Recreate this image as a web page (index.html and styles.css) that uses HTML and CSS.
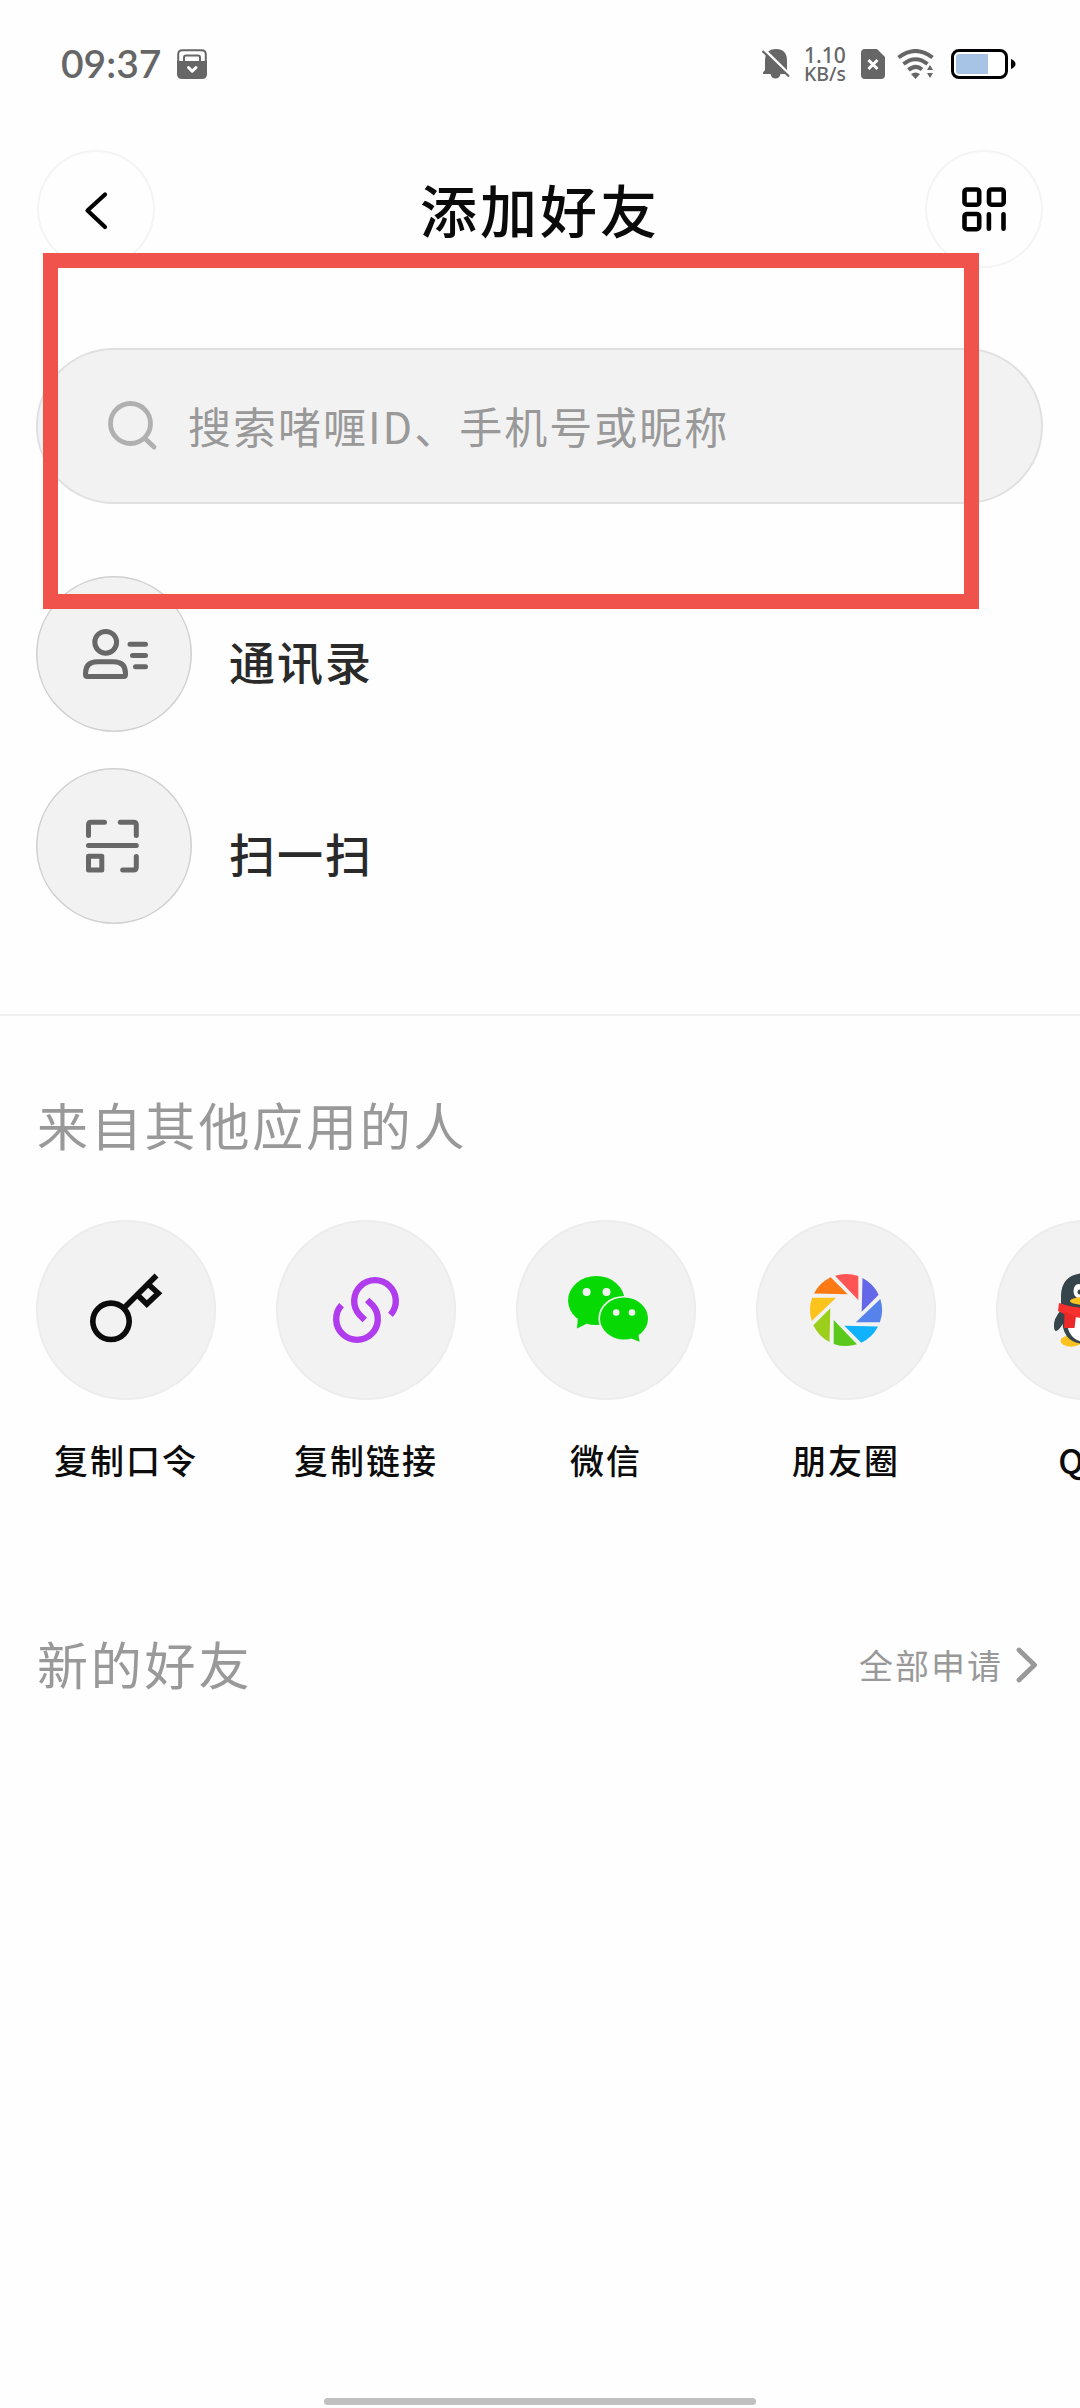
FILE: index.html
```html
<!DOCTYPE html>
<html lang="zh-CN">
<head>
<meta charset="utf-8">
<title>添加好友</title>
<link rel="stylesheet" href="styles.css">
</head>
<body>
<div class="screen">
  <div class="status">
    <span class="clock">09:37</span>
    <svg class="ic-pocket" width="30" height="30" viewBox="0 0 30 30">
      <path d="M1.2 14V5.5Q1.2 1.2 5.5 1.2H24.500Q28.800 1.200 28.800 5.500V14" fill="none" stroke="#666" stroke-width="2"/>
      <path d="M7 12V8.500Q7 6.500 9 6.500H21Q23 6.500 23 8.500V12" fill="none" stroke="#666" stroke-width="2"/>
      <path d="M0 12H30V25Q30 30 25 30H5Q0 30 0 25Z" fill="#666"/>
      <path d="M11.500 18.500L15.200 22.200L19 18.500" fill="none" stroke="#fff" stroke-width="3" stroke-linecap="round" stroke-linejoin="round"/>
    </svg>
    <div class="status-right">
      <svg class="ic-bell" width="28" height="30" viewBox="0 0 28 30">
        <path d="M1 25V23.500L3 21V12Q3 0 14 0Q25 0 25 12V21L26.500 23.500V25H18.500Q17.500 29.500 13.500 29.500Q9.500 29.500 8.500 25Z" fill="#666"/>
        <path d="M1 -0.500L29 27" stroke="#fefefe" stroke-width="3"/>
        <path d="M0.500 2L27 27.500" stroke="#666" stroke-width="2.200"/>
      </svg>
      <div class="speed"><span class="speed-n">1.10</span><span class="speed-u">KB/s</span></div>
      <svg class="ic-sim" width="24" height="30" viewBox="0 0 24 30">
        <path d="M4 0H16L24 8V26Q24 30 20 30H4Q0 30 0 26V4Q0 0 4 0Z" fill="#666"/>
        <path d="M7.500 11L16.500 20M16.500 11L7.500 20" stroke="#fff" stroke-width="3"/>
      </svg>
      <svg class="ic-wifi" width="37" height="30" viewBox="0 0 37 30">
        <g fill="none" stroke="#666" stroke-width="4">
          <path d="M1.500 8.500Q18.500 -4.500 35.500 8.500"/>
          <path d="M6.500 15Q18.500 5.500 30.500 15"/>
          <path d="M11.500 21Q18.500 15 25 20.500"/>
        </g>
        <path d="M14 25Q18.500 22 23 25L18.500 30Z" fill="#666"/>
        <path d="M30 21L33 16L36 21ZM30 24H36L33 29Z" fill="#666"/>
      </svg>
      <svg class="ic-batt" width="65" height="30" viewBox="0 0 65 30">
        <rect x="1.500" y="1.500" width="54" height="27" rx="6.500" fill="#fff" stroke="#000" stroke-width="3"/>
        <path d="M8 5H37V25H8Q5 25 5 22V8Q5 5 8 5Z" fill="#a7c4e6"/>
        <path d="M60 10Q64.500 12 64.500 15Q64.500 18 60 20Z" fill="#000"/>
      </svg>
    </div>
  </div>

  <div class="header">
    <div class="round-btn">
      <svg width="118" height="118" viewBox="0 0 118 118"><path d="M68 44.500L50.500 60.500L68 77" fill="none" stroke="#000" stroke-width="4.200" stroke-linecap="round" stroke-linejoin="round"/></svg>
    </div>
    <h1 class="title">添加好友</h1>
    <div class="round-btn">
      <svg width="118" height="118" viewBox="0 0 118 118"><g fill="none" stroke="#000" stroke-width="4.600" stroke-linecap="round">
        <rect x="39.500" y="39.500" width="14.700" height="15.200" rx="2.500"/>
        <rect x="64" y="39.500" width="14.700" height="15.200" rx="2.500"/>
        <rect x="39.500" y="64" width="14.700" height="15.200" rx="2.500"/>
        <path d="M63.900 64.200V78.800M78.500 64.200V78.800"/></g></svg>
    </div>
  </div>

  <div class="search">
    <svg width="50" height="50" viewBox="0 0 50 50"><g fill="none" stroke="#b0b0b0" stroke-width="4.800" stroke-linecap="round"><circle cx="22.500" cy="22.500" r="20"/><path d="M37 37.500L46 46"/></g></svg>
    <span class="search-text">搜索啫喱ID、手机号或昵称</span>
  </div>

  <div class="list">
    <div class="row">
      <svg class="row-ic" width="156" height="156" viewBox="0 0 156 156">
        <circle cx="78" cy="78" r="77.200" fill="#f2f2f2" stroke="#d0d0d0" stroke-width="1.500"/>
        <g fill="none" stroke="#686868" stroke-width="5" stroke-linecap="round" stroke-linejoin="round">
          <circle cx="69.700" cy="66.300" r="10.900"/>
          <path d="M49.500 97.500Q49.500 85.800 61.500 85.800H77.500Q89.500 85.800 89.500 97.500V98.500Q89.500 100.500 87.500 100.500H51.500Q49.500 100.500 49.500 98.500Z"/>
          <path d="M94 68.200H109.500M96.500 79.400H109.500M99.500 90.800H109.500"/>
        </g>
      </svg>
      <span class="row-text">通讯录</span>
    </div>
    <div class="row">
      <svg class="row-ic" width="156" height="156" viewBox="0 0 156 156">
        <circle cx="78" cy="78" r="77.200" fill="#f2f2f2" stroke="#d0d0d0" stroke-width="1.500"/>
        <g fill="none" stroke="#686868" stroke-width="5" stroke-linecap="round" stroke-linejoin="round">
          <path d="M52.500 67.500V57Q52.500 54.300 55.200 54.300H68.500M84.300 54.300H97.700Q100.300 54.300 100.300 57V67.500M52.500 77.500H100.300M100.300 88.500V99Q100.300 102 97.300 102H86.700"/>
          <rect x="52.500" y="88.300" width="13.300" height="13.600"/>
        </g>
      </svg>
      <span class="row-text">扫一扫</span>
    </div>
  </div>

  <h2 class="section">来自其他应用的人</h2>
  <div class="apps">
    <div class="app">
      <svg class="app-ic" width="180" height="180" viewBox="0 0 180 180">
        <g fill="none" stroke="#0c0c0c" stroke-width="5.600"><circle cx="75" cy="101.300" r="18.200"/><path d="M88 88L120.500 55.500M101.500 75L110.800 84L122.200 73.200L112 64"/></g>
      </svg>
      <span class="label">复制口令</span>
    </div>
    <div class="app">
      <svg class="app-ic" width="180" height="180" viewBox="0 0 180 180">
        <g fill="none" stroke="#b03cee" stroke-width="6.400"><path d="M114.500 94.800A20.800 20.800 0 1 0 83.500 94.800L88.800 100"/><path d="M65.500 85.200A20.800 20.800 0 1 0 96.500 85.200L91.200 80"/></g>
      </svg>
      <span class="label">复制链接</span>
    </div>
    <div class="app">
      <svg class="app-ic" width="180" height="180" viewBox="0 0 180 180">
        <g fill="#06d904"><ellipse cx="80.300" cy="80.500" rx="28.200" ry="24.500"/><path d="M62 97L61 108.500L74 102Z"/></g>
        <g fill="#f2f2f2"><circle cx="70.600" cy="72" r="4"/><circle cx="90.500" cy="72" r="4"/></g>
        <ellipse cx="108" cy="98.500" rx="25.600" ry="22.600" fill="#f2f2f2"/>
        <g fill="#06d904"><ellipse cx="108" cy="98.500" rx="24" ry="21"/><path d="M122 112L123.500 121.800L113 117.500Z"/></g>
        <g fill="#f2f2f2"><circle cx="100.200" cy="92.500" r="3.300"/><circle cx="116" cy="92.500" r="3.300"/></g>
      </svg>
      <span class="label">微信</span>
    </div>
    <div class="app">
      <svg class="app-ic" width="180" height="180" viewBox="0 0 180 180">
        <defs><path id="blade" d="M-11 -34.300A36 36 0 0 1 12.300 -33.900V-9.900Z"/></defs>
        <g transform="translate(90 90)">
          <use href="#blade" fill="#ff5454"/>
          <use href="#blade" fill="#6467e8" transform="rotate(45)"/>
          <use href="#blade" fill="#5582eb" transform="rotate(90)"/>
          <use href="#blade" fill="#0fb2fb" transform="rotate(135)"/>
          <use href="#blade" fill="#5ac91c" transform="rotate(180)"/>
          <use href="#blade" fill="#9bcf1c" transform="rotate(225)"/>
          <use href="#blade" fill="#fcc31c" transform="rotate(270)"/>
          <use href="#blade" fill="#fb7a14" transform="rotate(315)"/>
        </g>
      </svg>
      <span class="label">朋友圈</span>
    </div>
    <div class="app">
      <svg class="app-ic" width="180" height="180" viewBox="0 0 180 180">
        <ellipse cx="75" cy="121" rx="10.500" ry="5.800" fill="#fcc220"/>
        <ellipse cx="105" cy="121" rx="10.500" ry="5.800" fill="#fcc220"/>
        <g fill="#36454b"><path d="M65 90Q57 99 58 107Q58.500 113 62 110Q66 107 69 98Z"/><path d="M115 90Q123 99 122 107Q121.500 113 118 110Q114 107 111 98Z"/>
        <path d="M65 84V75Q66 53 90 53Q114 53 115 75V84L116 98Q116 124 90 124Q66 124 66 98Z"/></g>
        <path d="M70 96H110Q110 122 90 122Q71 122 70 96Z" fill="#fff"/>
        <ellipse cx="82.500" cy="71" rx="5" ry="7" fill="#fff"/><ellipse cx="97.500" cy="71" rx="5" ry="7" fill="#fff"/>
        <circle cx="84" cy="72" r="2.500" fill="#36454b"/><circle cx="96" cy="72" r="2.500" fill="#36454b"/>
        <ellipse cx="90" cy="81" rx="16" ry="4" fill="#fcc220"/>
        <path d="M63 83Q76 88 90 88Q104 88 117 83L118 91Q104 98 90 98Q74 98 62 91Z" fill="#f8302e"/>
        <path d="M68.500 92L80 96L78.500 108H68Z" fill="#e92a28"/>
      </svg>
      <span class="label">QQ</span>
    </div>
  </div>

  <div class="new">
    <h2 class="new-title">新的好友</h2>
    <div class="all"><span>全部申请</span>
      <svg width="22" height="36" viewBox="0 0 22 36"><path d="M3 3L18.500 18L3 33" fill="none" stroke="#999" stroke-width="4.800" stroke-linecap="round" stroke-linejoin="round"/></svg>
    </div>
  </div>

  <div class="home-bar"></div>
  <div class="highlight"></div>
</div>
</body>
</html>
```

FILE: styles.css
```css
* { box-sizing: border-box; }
body { margin: 0; background: #fefefe; }
h1, h2 { margin: 0; font-weight: 400; }
svg { display: block; flex: none; }

.screen {
  position: relative;
  width: 1080px;
  height: 2408px;
  overflow: hidden;
  display: flex;
  flex-direction: column;
  background: #fefefe;
  font-family: "Noto Sans CJK SC", sans-serif;
  white-space: nowrap;
}

.status {
  height: 150px;
  padding: 49px 64px 0 61px;
  display: flex;
  align-items: flex-start;
  color: #666;
}
.clock {
  width: 116px;
  height: 30px;
  font: 600 39px/29px Lato, sans-serif;
}
.status-right { margin-left: auto; display: flex; }
.speed {
  width: 57px;
  margin: -3px 0 0 14px;
  display: flex;
  flex-direction: column;
  font-family: "Noto Sans", sans-serif;
  font-weight: 500;
}
.speed-n { font-size: 21px; line-height: 18px; }
.speed-u { font-size: 19.500px; line-height: 20px; }
.ic-wifi { margin-left: 12px; }
.ic-batt { margin-left: 17px; }

.header {
  height: 118px;
  padding: 0 37px;
  display: flex;
  justify-content: space-between;
}
.round-btn {
  width: 118px;
  height: 118px;
  border-radius: 50%;
  box-shadow: inset 0 0 0 2px #f4f4f4;
}
.title {
  font-size: 57px;
  font-weight: 500;
  line-height: 117px;
  letter-spacing: 3px;
  color: #0a0a0a;
}

.search {
  height: 156px;
  margin: 80px 37px 0 36px;
  padding: 0 70px;
  display: flex;
  align-items: center;
  gap: 30px;
  border: 2px solid #e0e0e0;
  border-radius: 78px;
  background: #f2f2f2;
}
.search-text {
  padding-bottom: 3px;
  font-size: 43px;
  letter-spacing: 2px;
  color: #999;
}

.list {
  height: 512px;
  padding: 72px 36px 0;
  display: flex;
  flex-direction: column;
  gap: 36px;
  border-bottom: 2px solid #f0f0f0;
}
.row { display: flex; gap: 37px; }
.row-text {
  padding-top: 16px;
  font-size: 46px;
  font-weight: 500;
  line-height: 136px;
  letter-spacing: 2px;
  color: #2a2a2a;
}

.section {
  height: 204px;
  padding: 73px 37px 0;
  font-size: 51px;
  line-height: 70px;
  letter-spacing: 2.800px;
  color: #999;
}

.apps {
  height: 380px;
  padding-left: 36px;
  display: flex;
  gap: 60px;
}
.app {
  flex: none;
  width: 180px;
  display: flex;
  flex-direction: column;
  align-items: center;
}
.app-ic {
  border-radius: 50%;
  background: #f2f2f2;
  box-shadow: inset 0 0 0 2px #ededed;
}
.label {
  margin-top: 35px;
  font-size: 34px;
  line-height: 50px;
  letter-spacing: 2px;
  font-weight: 500;
  color: #0c0c0c;
}

.new {
  height: 130px;
  padding: 0 42px 0 37px;
  display: flex;
  align-items: center;
  justify-content: space-between;
  color: #999;
}
.new-title { padding-bottom: 4px; font-size: 51px; letter-spacing: 2.800px; }
.all {
  display: flex;
  align-items: center;
  gap: 13px;
  padding-bottom: 1px;
  font-size: 34px;
  letter-spacing: 2px;
}

.home-bar {
  width: 432px;
  height: 7px;
  margin: auto auto 3px;
  border-radius: 4px;
  background: #c0c0c0;
}

.highlight {
  position: absolute;
  left: 43px;
  top: 253px;
  width: 936px;
  height: 356px;
  border: 15px solid #f0524c;
}
```
